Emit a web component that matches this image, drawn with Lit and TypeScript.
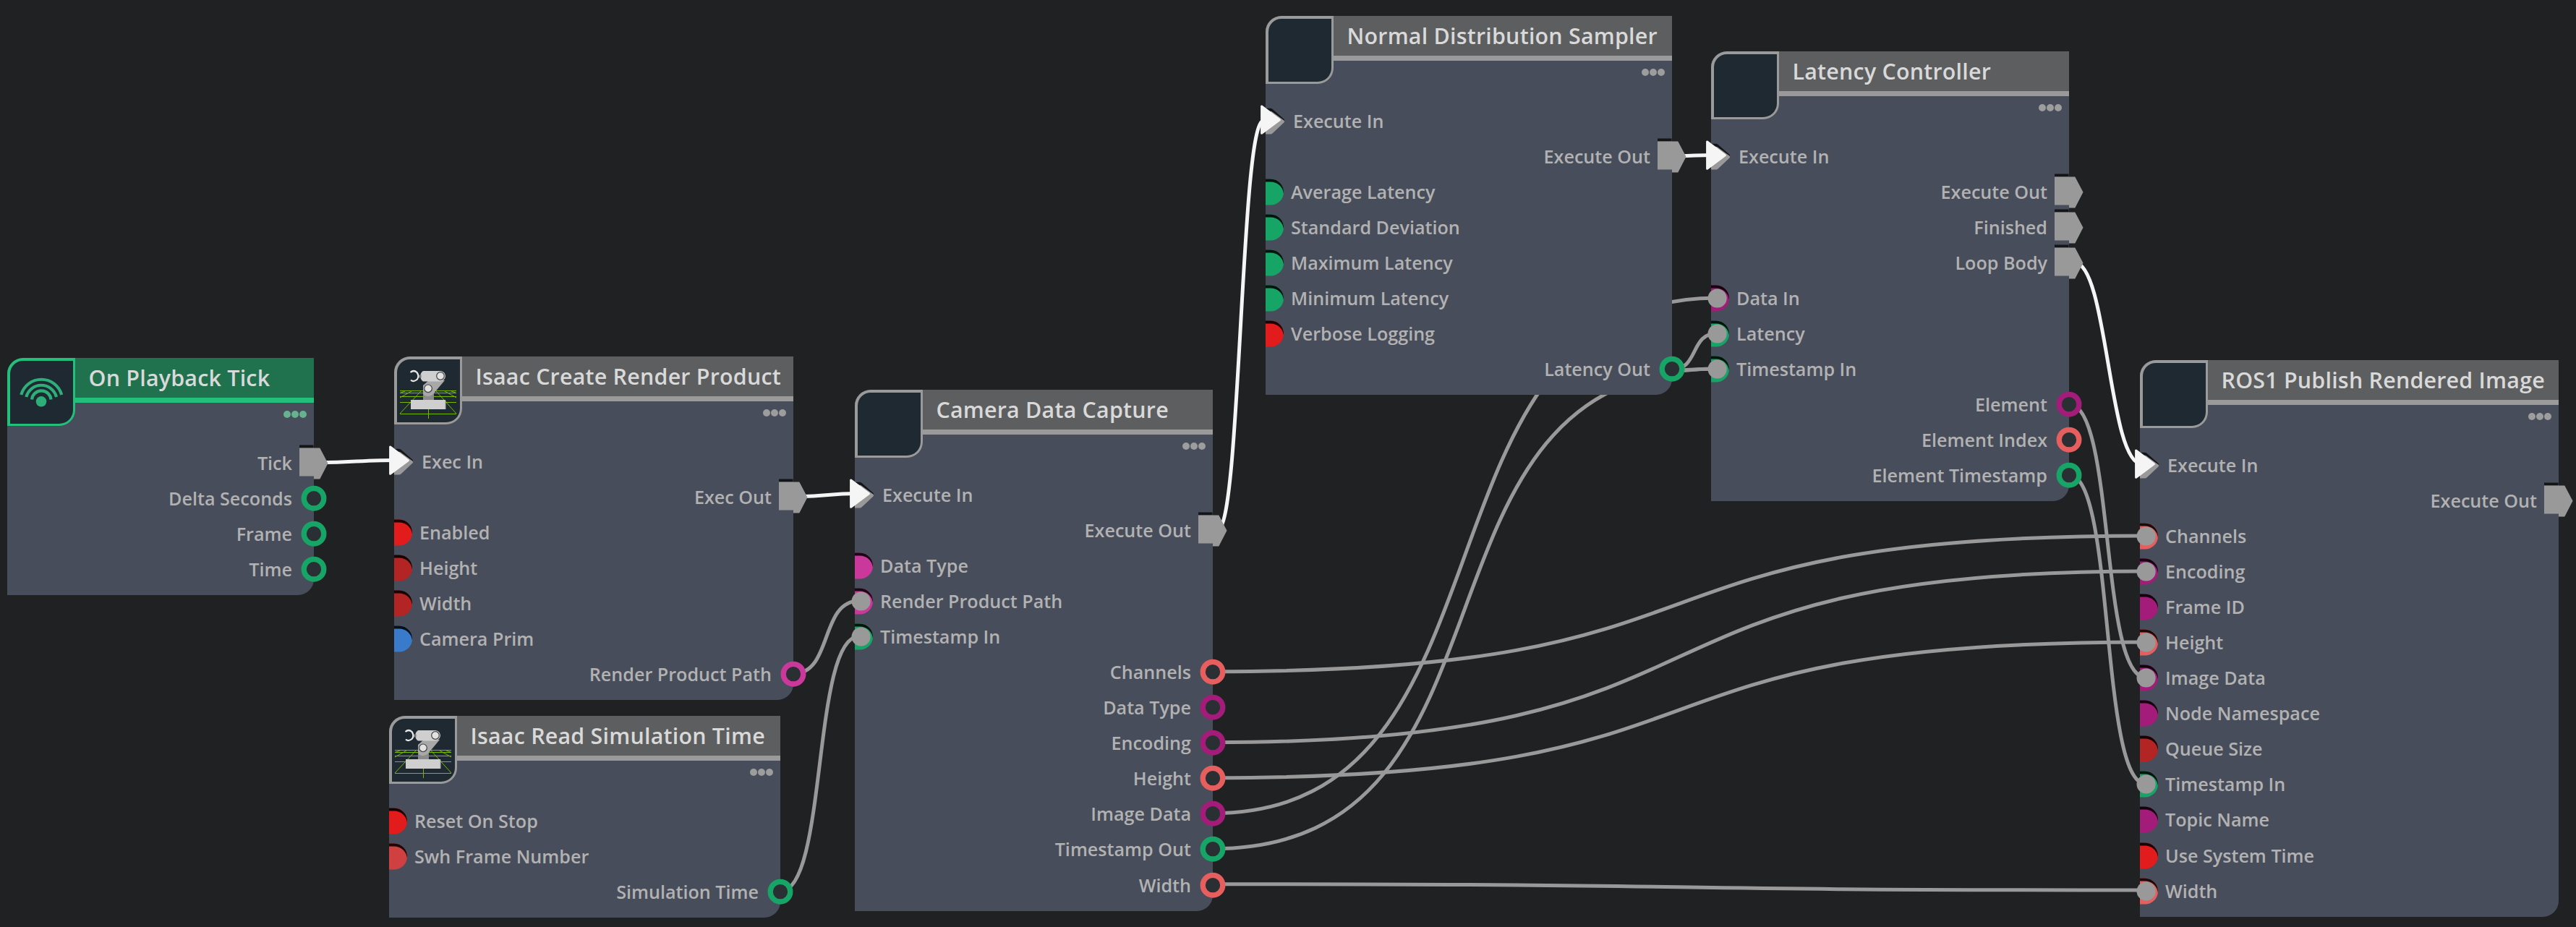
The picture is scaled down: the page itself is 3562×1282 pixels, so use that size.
import { LitElement, html, svg, css, nothing } from "lit";
import { customElement, property } from "lit/decorators.js";
import { classMap } from "lit/directives/class-map.js";
import { styleMap } from "lit/directives/style-map.js";

type Kind = "exec" | "data";
interface Port {
  label: string;
  side: "in" | "out";
  kind: Kind;
  color?: string;
  linked?: boolean;
}
interface GraphNode {
  id: string;
  title: string;
  x: number;
  y: number;
  width: number;
  accent?: "event";
  icon?: "signal" | "robot";
  ports: Port[];
}
interface Wire {
  from: [number, number];
  to: [number, number];
  bend: number;
  exec?: boolean;
}

const GREEN = "#17a567";
const RED = "#e21c1c";
const BRICK = "#b32424";
const ROSE = "#d04040";
const CORAL = "#e75e5e";
const BLUE = "#3a7acb";
const PINK = "#cb389b";
const MAGENTA = "#a31c79";

const execIn = (label: string, linked = true): Port => ({ label, side: "in", kind: "exec", linked });
const execOut = (label: string): Port => ({ label, side: "out", kind: "exec" });
const input = (label: string, color: string, linked = false): Port => ({ label, side: "in", kind: "data", color, linked });
const output = (label: string, color: string): Port => ({ label, side: "out", kind: "data", color });

const NODES: GraphNode[] = [
  {
    id: "tick", title: "On Playback Tick", x: 10, y: 495, width: 424, accent: "event", icon: "signal",
    ports: [execOut("Tick"), output("Delta Seconds", GREEN), output("Frame", GREEN), output("Time", GREEN)],
  },
  {
    id: "render", title: "Isaac Create Render Product", x: 545, y: 493, width: 552, icon: "robot",
    ports: [
      execIn("Exec In"), execOut("Exec Out"), input("Enabled", RED), input("Height", BRICK),
      input("Width", BRICK), input("Camera Prim", BLUE), output("Render Product Path", PINK),
    ],
  },
  {
    id: "simtime", title: "Isaac Read Simulation Time", x: 538, y: 990, width: 541, icon: "robot",
    ports: [input("Reset On Stop", RED), input("Swh Frame Number", ROSE), output("Simulation Time", GREEN)],
  },
  {
    id: "camera", title: "Camera Data Capture", x: 1182, y: 539, width: 495,
    ports: [
      execIn("Execute In"), execOut("Execute Out"), input("Data Type", PINK),
      input("Render Product Path", PINK, true), input("Timestamp In", GREEN, true),
      output("Channels", CORAL), output("Data Type", MAGENTA), output("Encoding", MAGENTA),
      output("Height", CORAL), output("Image Data", MAGENTA), output("Timestamp Out", GREEN), output("Width", CORAL),
    ],
  },
  {
    id: "sampler", title: "Normal Distribution Sampler", x: 1750, y: 22, width: 562,
    ports: [
      execIn("Execute In"), execOut("Execute Out"), input("Average Latency", GREEN),
      input("Standard Deviation", GREEN), input("Maximum Latency", GREEN), input("Minimum Latency", GREEN),
      input("Verbose Logging", RED), output("Latency Out", GREEN),
    ],
  },
  {
    id: "latency", title: "Latency Controller", x: 2366, y: 71, width: 495,
    ports: [
      execIn("Execute In"), execOut("Execute Out"), execOut("Finished"), execOut("Loop Body"),
      input("Data In", MAGENTA, true), input("Latency", GREEN, true), input("Timestamp In", GREEN, true),
      output("Element", MAGENTA), output("Element Index", CORAL), output("Element Timestamp", GREEN),
    ],
  },
  {
    id: "publish", title: "ROS1 Publish Rendered Image", x: 2959, y: 498, width: 579,
    ports: [
      execIn("Execute In"), execOut("Execute Out"), input("Channels", CORAL, true),
      input("Encoding", MAGENTA, true), input("Frame ID", MAGENTA), input("Height", CORAL, true),
      input("Image Data", MAGENTA, true), input("Node Namespace", MAGENTA), input("Queue Size", BRICK),
      input("Timestamp In", GREEN, true), input("Topic Name", MAGENTA), input("Use System Time", RED),
      input("Width", CORAL, true),
    ],
  },
];

const WIRES: Wire[] = [
  { from: [440, 639.7], to: [545, 636.5], bend: 0.5, exec: true },
  { from: [1105, 686.7], to: [1185, 682.5], bend: 0.5, exec: true },
  { from: [1684, 732.7], to: [1747, 166.7], bend: 0.5, exec: true },
  { from: [2320, 215.7], to: [2368, 214.5], bend: 0.5, exec: true },
  { from: [2868, 362.7], to: [2962, 642], bend: 0.5, exec: true },
  { from: [1097, 931.7], to: [1188, 831], bend: 0.6 },
  { from: [1079, 1232.7], to: [1188, 880], bend: 0.6 },
  { from: [1677, 928.7], to: [2967, 741], bend: 0.6 },
  { from: [1677, 1026.7], to: [2967, 790], bend: 0.6 },
  { from: [1677, 1075.7], to: [2967, 888], bend: 0.6 },
  { from: [1677, 1124.7], to: [2374, 412], bend: 0.63 },
  { from: [1677, 1173.7], to: [2374, 510], bend: 0.65 },
  { from: [1677, 1222.7], to: [2967, 1231], bend: 0.6 },
  { from: [2312, 511], to: [2374, 461], bend: 0.6 },
  { from: [2312, 512], to: [2374, 510], bend: 0.5 },
  { from: [2861, 558.7], to: [2967, 937], bend: 0.6 },
  { from: [2861, 656.7], to: [2967, 1084], bend: 0.6 },
];

const wirePath = ({ from: [x0, y0], to: [x1, y1], bend }: Wire) => {
  const h = (x1 - x0) * bend;
  return `M${x0} ${y0} C${x0 + h} ${y0} ${x1 - h} ${y1} ${x1} ${y1}`;
};

@customElement("port-mark")
class PortMark extends LitElement {
  @property({ attribute: false }) port!: Port;

  static styles = css`
    :host { display: block; flex: none; height: 49px; }
    svg { display: block; overflow: visible; }
  `;

  render() {
    const { side, kind, color, linked } = this.port;
    if (side === "out" && kind === "exec") {
      return html`<svg width="40" height="49" viewBox="0 0 40 49">
        <path fill="#131516" d="M0 -0.5h19.5v4h-19.5z" />
        <path fill="#999" d="M0 3.5H28.3L39.5 24.8L28.3 46.5H20V42.5H0z" />
      </svg>`;
    }
    if (side === "out") {
      return html`<svg width="40" height="49" viewBox="0 0 40 49">
        <circle cx="20" cy="24.2" r="13.8" fill="#2a2f33" stroke=${color!} stroke-width="7.3" />
      </svg>`;
    }
    if (kind === "exec") {
      return html`<svg width="28" height="49" viewBox="0 0 28 49">
        <path fill="#131516" d="M0 6.8H6Q8.5 6.8 10 8.2L25.4 21.8Q27 23 25.4 24.8L8 40H0z" />
        <path fill="#999" d="M0 10.8H6Q8.5 10.8 10 12.2L25.4 23.5Q27 25 25.4 26.5L10 41Q8.5 42.5 6.5 42.5H0z" />
        <path fill="#f5f5f5" stroke="#f5f5f5" stroke-width="3" stroke-linejoin="round" d="M-5.4 4V41.3L19.4 22.7z" />
      </svg>`;
    }
    return html`<svg width="28" height="49" viewBox="0 0 28 49">
      <path fill=${color!} d="M0 6.5H7A18 18 0 0 1 7 42.5H0z" />
      <path fill="#000" fill-opacity="0.88" d="M0 6.5H7A18 18 0 0 1 24.9 26.5A18 18 0 0 0 7 10.5H0z" />
      ${linked ? svg`<circle cx="8.6" cy="24.5" r="13.1" fill="#999" />` : nothing}
    </svg>`;
  }
}

@customElement("node-icon")
class NodeIcon extends LitElement {
  @property() name = "";

  static styles = css`
    :host { display: block; }
    svg { display: block; }
  `;

  render() {
    if (this.name === "signal") {
      return html`<svg width="87" height="87" viewBox="0 0 87 87" fill="none" stroke="#2eae79" stroke-width="4.2">
        <circle cx="43" cy="56.3" r="7.3" fill="#2eae79" stroke="none" />
        <path d="M30 53.5A13.3 13.3 0 0 1 56.5 53.5" />
        <path d="M22.3 50A21.5 21.5 0 0 1 64 50" />
        <path d="M15.3 47A29 29 0 0 1 71.2 47" />
      </svg>`;
    }
    if (this.name === "robot") {
      return html`<svg width="87" height="87" viewBox="0 0 87 87" fill="none">
        <g stroke="#76b900" stroke-width="1">
          <path d="M4 43.5H82M4 46.5H82M4 51.5H82M4 59.5H82M4 75.5H82M43.5 69V82" />
          <path d="M4 75L33 44M82 75L54 44M4 53L20 44M4 46.5L11 44M82 53L66 44M82 46.5L75 44" />
        </g>
        <path fill="#8b8b8b" d="M36 40h15v18h-15z" />
        <path fill="#a8a8a8" d="M36 36L44 29H66L50 48Q45 53 38 50L36 47z" />
        <path fill="#cfcfcf" d="M36 16H60Q66.5 17 67 23Q66.5 29 60 30.5H36Q32 28 32.5 23Q32 19 36 16z" />
        <path fill="#777" d="M29.5 21.5h4v4h-4z" />
        <path stroke="#e8e8e8" stroke-width="2.2" d="M18.5 18Q23 14 27.5 18Q31 23 28 27.5Q23 32 19 28.5" />
        <circle cx="60" cy="23" r="5.3" fill="#e2e2e2" stroke="#444" stroke-width="1.2" />
        <circle cx="43" cy="40.3" r="5.3" fill="#e2e2e2" stroke="#444" stroke-width="1.2" />
        <path fill="#cfcfcf" d="M19 56h48v13h-48z" />
        <path fill="#a8a8a8" d="M66.5 57h1v12h-1z" />
      </svg>`;
    }
    return nothing;
  }
}

@customElement("graph-node")
class GraphNodeCard extends LitElement {
  @property({ attribute: false }) node!: GraphNode;

  static styles = css`
    :host { display: block; }
    .card {
      display: flex;
      flex-direction: column;
      background: #484d5b;
      border-radius: 22px 0 22px 0;
      padding-bottom: 11px;
      color: #b2b2b2;
    }
    .head { display: flex; height: 121px; }
    .icon {
      flex: none;
      box-sizing: border-box;
      width: 94px;
      height: 94px;
      border: solid #9a9a9a;
      border-width: 4px 3px 3px 4px;
      border-radius: 22px 0 22px 0;
      background: #1f2932;
    }
    .heading { flex: 1; min-width: 0; display: flex; flex-direction: column; }
    .title {
      box-sizing: border-box;
      height: 62px;
      padding-left: 18.5px;
      background: #5d5e5f;
      border-bottom: 7px solid #9a9a9a;
      color: #d9d9d9;
      font-size: 30.4px;
      font-weight: 600;
      line-height: 55px;
      letter-spacing: 0.22px;
      white-space: nowrap;
    }
    .more { display: flex; justify-content: flex-end; gap: 1px; padding: 11px 10px 0 0; }
    .dot { width: 10px; height: 10px; border-radius: 50%; background: #9d9d9d; }
    .event .icon { border-color: #23c07c; }
    .event .title { background: #20724f; border-color: #23c07c; }
    .event .dot { background: #66b28f; }
    .row { display: flex; align-items: center; height: 49.05px; }
    .row.out { justify-content: flex-end; margin-right: -20px; gap: 10px; }
    .row.in { gap: 7px; }
    .row.in.exec { gap: 10px; }
    .label {
      font-size: 25.15px;
      font-weight: 600;
      line-height: 49px;
      white-space: nowrap;
    }
  `;

  render() {
    const n = this.node;
    return html`<article class=${classMap({ card: true, event: n.accent === "event" })}>
      <header class="head">
        <div class="icon"><node-icon name=${n.icon ?? ""}></node-icon></div>
        <div class="heading">
          <div class="title">${n.title}</div>
          <div class="more"><i class="dot"></i><i class="dot"></i><i class="dot"></i></div>
        </div>
      </header>
      ${n.ports.map((p) => {
        const mark = html`<port-mark .port=${p}></port-mark>`;
        const label = html`<span class="label">${p.label}</span>`;
        return html`<div class=${classMap({ row: true, [p.side]: true, [p.kind]: true })}>
          ${p.side === "in" ? [mark, label] : [label, mark]}
        </div>`;
      })}
    </article>`;
  }
}

@customElement("app-root")
class AppRoot extends LitElement {
  static styles = css`
    :host {
      display: block;
      position: relative;
      width: 3562px;
      height: 1282px;
      overflow: hidden;
      background: #202123;
      font-family: "Open Sans", "Noto Sans", sans-serif;
    }
    .wires { position: absolute; inset: 0; }
    .node { position: absolute; }
    .wire { fill: none; stroke: #999; stroke-width: 5; }
    .wire.exec { stroke: #f5f5f5; }
  `;

  render() {
    return html`
      <svg class="wires" width="3562" height="1282" viewBox="0 0 3562 1282">
        ${WIRES.map((w) => svg`<path class=${w.exec ? "wire exec" : "wire"} d=${wirePath(w)} />`)}
      </svg>
      ${NODES.map((n) => html`<graph-node
        class="node"
        .node=${n}
        style=${styleMap({ left: `${n.x}px`, top: `${n.y}px`, width: `${n.width}px` })}
      ></graph-node>`)}
    `;
  }
}
